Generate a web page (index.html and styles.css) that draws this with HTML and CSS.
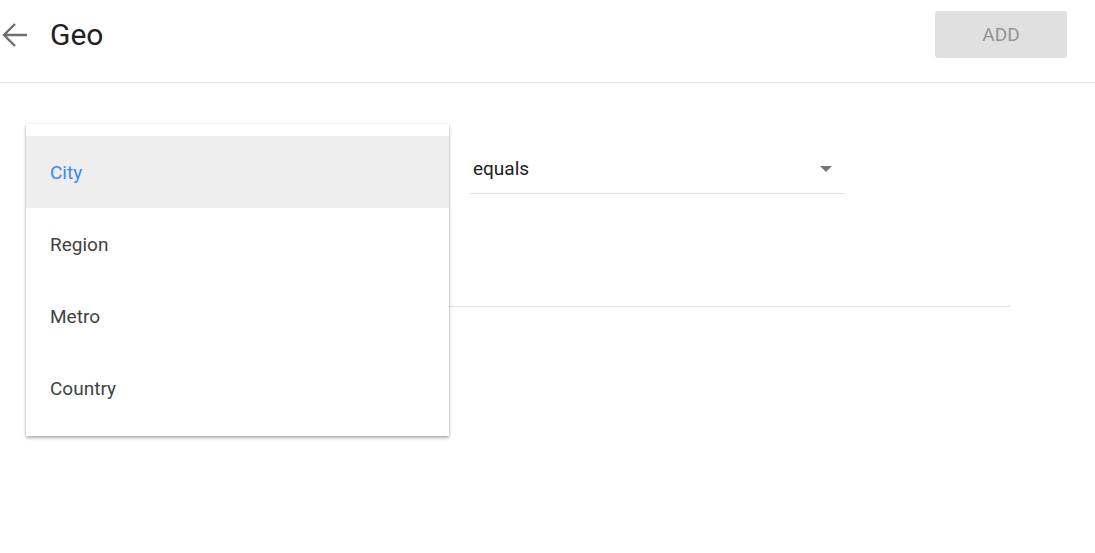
FILE: index.html
```html
<!DOCTYPE html>
<html lang="en">
<head>
    <meta charset="UTF-8">
    <meta name="viewport" content="width=device-width, initial-scale=1.0">
    <title>Geo</title>
    <link rel="stylesheet" href="styles.css">
</head>
<body>
    <header class="toolbar">
        <button class="back-btn" aria-label="Back">
            <svg width="26" height="26" viewBox="0 0 26 26">
                <path d="M25 13H3M13 2L2 13l11 11" fill="none" stroke="#6f6f6f" stroke-width="2.4"/>
            </svg>
        </button>
        <h1 class="title">Geo</h1>
        <button class="add-btn" disabled>ADD</button>
    </header>

    <main class="form">
        <div class="row">
            <div class="field field-type"></div>
            <div class="field field-op">
                <span class="field-value">equals</span>
                <span class="caret"></span>
            </div>
        </div>
        <div class="row">
            <div class="field field-text"></div>
        </div>

        <ul class="menu">
            <li class="menu-item selected">City</li>
            <li class="menu-item">Region</li>
            <li class="menu-item">Metro</li>
            <li class="menu-item">Country</li>
        </ul>
    </main>
</body>
</html>
```

FILE: styles.css
```css
* {
    margin: 0;
    padding: 0;
    box-sizing: border-box;
}

body {
    font-family: Roboto, "Liberation Sans", sans-serif;
    background: #fff;
    color: #212121;
}

.toolbar {
    display: flex;
    align-items: center;
    height: 83px;
    border-bottom: 1px solid #e0e0e0;
    padding: 0 28px 13px 2px;
}

.back-btn {
    background: none;
    border: none;
    width: 26px;
    height: 26px;
    display: flex;
    cursor: pointer;
}

.title {
    font-size: 30px;
    font-weight: 400;
    margin-left: 22px;
    color: #212121;
    flex: 1;
}

.add-btn {
    width: 132px;
    height: 47px;
    border: none;
    border-radius: 3px;
    background: #e0e0e0;
    color: #949494;
    font-family: Roboto, sans-serif;
    font-size: 19px;
}

.form {
    position: relative;
    width: 1010px;
    min-height: 380px;
    padding: 0 0 0 26px;
}

.row {
    display: flex;
    gap: 21px;
}

.field {
    height: 48px;
    border-bottom: 1px solid #e0e0e0;
    display: flex;
    align-items: center;
    padding: 0 3px;
    font-size: 19px;
    color: #212121;
}

.field-type {
    width: 423px;
    margin-top: 63px;
}

.field-op {
    width: 375px;
    margin-top: 63px;
    justify-content: space-between;
    padding-bottom: 2px;
}

.caret {
    width: 0;
    height: 0;
    border-left: 6px solid transparent;
    border-right: 6px solid transparent;
    border-top: 6px solid #757575;
    margin-right: 10px;
}

.field-text {
    flex: 1;
    margin-top: 65px;
}

.menu {
    position: absolute;
    top: 41px;
    left: 26px;
    width: 423px;
    list-style: none;
    background: #fff;
    padding: 12px 0;
    box-shadow: 0 2px 3px rgba(0, 0, 0, 0.3), 0 0 2px rgba(0, 0, 0, 0.12);
}

.menu-item {
    height: 72px;
    display: flex;
    align-items: center;
    padding-left: 24px;
    font-size: 19px;
    color: #424242;
}

.menu-item.selected {
    background: #eeeeee;
    color: #4285f4;
}
```
